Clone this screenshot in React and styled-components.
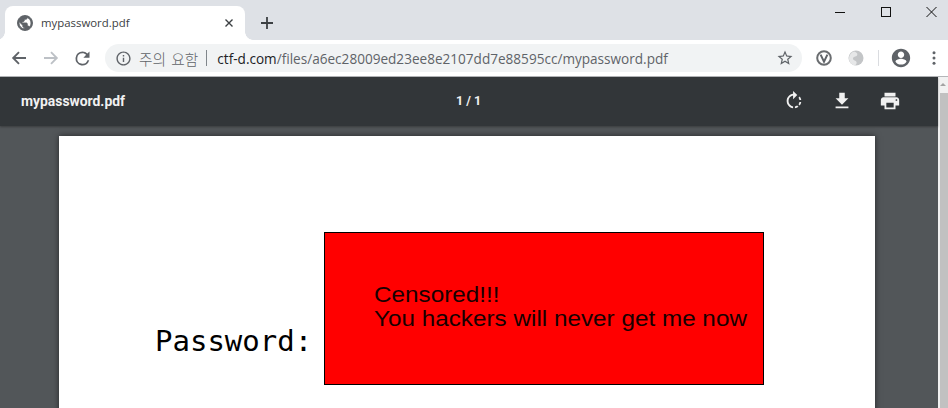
import React from 'react';
import styled, { createGlobalStyle } from 'styled-components';

const GlobalStyle = createGlobalStyle`
  html, body {
    margin: 0;
    padding: 0;
    height: 408px;
    overflow: hidden;
    background: #fff;
    font-family: "Roboto", "Liberation Sans", sans-serif;
  }
`;

const Browser = styled.div`
  width: 948px;
  height: 408px;
  display: flex;
  flex-direction: column;
  overflow: hidden;
`;

const TabStrip = styled.div`
  height: 40px;
  flex: none;
  background: #dee1e6;
  display: flex;
  align-items: flex-end;
  padding-left: 5px;
`;

const Tab = styled.div`
  position: relative;
  width: 240px;
  height: 34px;
  background: #fff;
  border-radius: 8px 8px 0 0;
  display: flex;
  align-items: center;
  padding: 0 0 0 11px;
  box-sizing: border-box;
  color: #3c4043;
  font-size: 11.4px;
  font-family: "Open Sans", sans-serif;

  &::before, &::after {
    content: '';
    position: absolute;
    bottom: 0;
    width: 8px;
    height: 8px;
    background: radial-gradient(circle at 0 0, #dee1e6 7.5px, #fff 8px);
  }
  &::before { left: -8px; }
  &::after { right: -8px; background: radial-gradient(circle at 100% 0, #dee1e6 7.5px, #fff 8px); }
`;

const TabTitle = styled.span`
  margin-left: 7px;
  flex: 1;
  position: relative;
  top: -1px;
`;

const TabClose = styled.svg`
  width: 8px;
  height: 8px;
  margin-right: 12px;
`;

const NewTab = styled.svg`
  width: 12px;
  height: 12px;
  margin: 0 0 11px 16px;
`;

const WindowControls = styled.div`
  margin-left: auto;
  margin-right: -7px;
  align-self: flex-start;
  display: flex;
  align-items: center;
  height: 24px;
`;

const WindowButton = styled.svg`
  width: 46px;
  height: 24px;
  display: block;
`;

const Toolbar = styled.div`
  height: 36px;
  flex: none;
  background: #fff;
  display: flex;
  align-items: center;
  box-sizing: border-box;
  padding-left: 11px;
`;

const NavIcon = styled.svg`
  width: ${p => p.$size || 16}px;
  height: ${p => p.$size || 16}px;
  margin-right: ${p => p.$gap}px;
  flex: none;
`;

const Omnibox = styled.div`
  width: 697px;
  height: 28px;
  flex: none;
  border-radius: 14px;
  background: #f1f3f4;
  display: flex;
  align-items: center;
  padding: 0 8px 0 10px;
  box-sizing: border-box;
  font-family: "Open Sans", sans-serif;
`;

const OmniIcon = styled.svg`
  width: ${p => p.$size}px;
  height: ${p => p.$size}px;
  flex: none;
`;

const Security = styled.span`
  color: #5f6368;
  font-family: "Noto Sans CJK KR", sans-serif;
  font-size: 14.7px;
  font-weight: 300;
  word-spacing: 2px;
  margin-left: 7px;
  white-space: nowrap;
`;

const Divider = styled.span`
  width: 1px;
  height: 16px;
  background: #80868b;
  margin: 0 10px 0 8px;
`;

const Url = styled.span`
  color: #5f6368;
  flex: 1;
  white-space: nowrap;
  font-size: 13.58px;
  b { font-weight: 400; color: #202124; }
`;

const Extensions = styled.div`
  display: flex;
  align-items: center;
  flex: none;
  margin-left: 14px;
`;

const ExtIcon = styled.svg`
  width: ${p => p.$size || 16}px;
  height: ${p => p.$size || 16}px;
  margin-right: ${p => p.$gap}px;
  flex: none;
`;

const ExtDivider = styled.span`
  width: 1px;
  height: 16px;
  background: #dadce0;
  margin-right: 11px;
`;

const ContentArea = styled.div`
  flex: 1;
  display: flex;
  min-height: 0;
  border-top: 1px solid #b4b6b9;
`;

const Viewer = styled.div`
  flex: 1;
  display: flex;
  flex-direction: column;
  background: #525659;
  min-width: 0;
`;

const PdfToolbar = styled.div`
  height: 49px;
  flex: none;
  background: #323639;
  color: #f1f1f1;
  display: grid;
  grid-template-columns: 1fr auto 1fr;
  align-items: center;
  padding: 0 37px 0 21px;
  box-shadow: 0 1px 2px rgba(0, 0, 0, 0.3);
  font-size: 13.9px;
  font-weight: 700;
  font-family: "Roboto", sans-serif;
  position: relative;
`;

const DocTitle = styled.span`
  margin-bottom: 2px;
`;

const PageCount = styled.span`
  font-size: 12.5px;
  font-weight: 700;
  margin: 0 0 2px 15px;
`;

const PdfActions = styled.div`
  display: flex;
  justify-content: flex-end;
  align-items: center;
  gap: 26px;
  margin-bottom: 1px;
`;

const PdfIcon = styled.svg`
  width: 22px;
  height: 22px;
  display: block;
  fill: #f1f1f1;
`;

const PageWrap = styled.div`
  flex: 1;
  padding: 10px 63px 0 59px;
  min-height: 0;
  overflow: hidden;
`;

const Page = styled.div`
  background: #fff;
  height: 400px;
  box-shadow: 0 0 6px rgba(0, 0, 0, 0.55);
  display: flex;
  align-items: flex-start;
  padding: 96px 0 0 96px;
  box-sizing: border-box;
`;

const PasswordLabel = styled.span`
  font-family: "DejaVu Sans Mono", monospace;
  font-size: 29px;
  line-height: 32px;
  color: #000;
  margin-top: 93px;
  margin-right: 12px;
  width: 157px;
  white-space: nowrap;
`;

const Censored = styled.div`
  width: 440px;
  height: 153px;
  flex: none;
  box-sizing: border-box;
  background: #ff0000;
  border: 1px solid #000;
  padding: 50px 0 0 49px;
`;

const CensoredText = styled.div`
  font-family: "Liberation Sans", sans-serif;
  font-size: 21.4px;
  line-height: 24px;
  color: #180000;
  white-space: nowrap;
  transform: scaleX(1.135);
  transform-origin: left top;
`;

const Scrollbar = styled.div`
  width: 10px;
  flex: none;
  background: #f1f1f1;
  display: flex;
  flex-direction: column;
  align-items: flex-end;
`;

const ScrollArrow = styled.div`
  height: 16px;
  width: 100%;
  display: flex;
  justify-content: center;
  padding-top: 6px;
  box-sizing: border-box;
  &::before {
    content: '';
    border-left: 3px solid transparent;
    border-right: 3px solid transparent;
    border-bottom: 3px solid #a3a3a3;
    height: 0;
  }
`;

const ScrollThumb = styled.div`
  width: 8px;
  flex: 1;
  background: #c1c1c1;
`;

const App = () => (
  <Browser>
    <GlobalStyle />
    <TabStrip>
      <Tab>
        <svg width="18" height="18" viewBox="0 0 24 24">
          <path fill="#5f6368" stroke="#5f6368" strokeWidth="1.2" d="M12 2C6.48 2 2 6.48 2 12s4.48 10 10 10 10-4.48 10-10S17.52 2 12 2zm-1 17.93c-3.95-.49-7-3.85-7-7.93 0-.62.08-1.21.21-1.79L9 15v1c0 1.1.9 2 2 2v1.93zm6.9-2.54c-.26-.81-1-1.39-1.9-1.39h-1v-3c0-.55-.45-1-1-1H8v-2h2c.55 0 1-.45 1-1V7h2c1.1 0 2-.9 2-2v-.41c2.93 1.19 5 4.06 5 7.41 0 2.08-.8 3.97-2.1 5.39z" />
        </svg>
        <TabTitle>mypassword.pdf</TabTitle>
        <TabClose viewBox="0 0 8 8">
          <path d="M0.5 0.5L7.5 7.5M7.5 0.5L0.5 7.5" stroke="#3c4043" strokeWidth="1.4" />
        </TabClose>
      </Tab>
      <NewTab viewBox="0 0 12 12">
        <path d="M6 0v12M0 6h12" stroke="#3c4043" strokeWidth="1.8" />
      </NewTab>
      <WindowControls>
        <WindowButton viewBox="0 0 46 24">
          <path d="M18 12.5h10" stroke="#111" strokeWidth="1" />
        </WindowButton>
        <WindowButton viewBox="0 0 46 24">
          <rect x="18.5" y="7.5" width="9" height="9" fill="none" stroke="#111" />
        </WindowButton>
        <WindowButton viewBox="0 0 46 24">
          <path d="M17.5 7l10 10M27.5 7l-10 10" stroke="#111" strokeWidth="1" />
        </WindowButton>
      </WindowControls>
    </TabStrip>

    <Toolbar>
      <NavIcon $gap={16} viewBox="0 0 16 16">
        <path d="M15 8H2.5M8 2.2L2.2 8 8 13.8" fill="none" stroke="#5f6368" strokeWidth="1.9" />
      </NavIcon>
      <NavIcon $gap={13} viewBox="0 0 16 16">
        <path d="M1 8h12.5M8 2.2L13.8 8 8 13.8" fill="none" stroke="#bdc1c6" strokeWidth="1.9" />
      </NavIcon>
      <NavIcon $gap={12} $size={21} viewBox="0 0 24 24">
        <path fill="#5f6368" d="M17.65 6.35A7.96 7.96 0 0 0 12 4a8 8 0 1 0 7.73 10h-2.08A6 6 0 1 1 12 6c1.66 0 3.14.69 4.22 1.78L13 11h7V4l-2.35 2.35z" />
      </NavIcon>
      <Omnibox>
        <OmniIcon $size={17} viewBox="0 0 24 24">
          <path fill="#5f6368" d="M11 7h2v2h-2zm0 4h2v6h-2zm1-9C6.48 2 2 6.48 2 12s4.48 10 10 10 10-4.48 10-10S17.52 2 12 2zm0 18c-4.41 0-8-3.59-8-8s3.59-8 8-8 8 3.59 8 8-3.59 8-8 8z" />
        </OmniIcon>
        <Security>주의 요함</Security>
        <Divider />
        <Url><b>ctf-d.com</b>/files/a6ec28009ed23ee8e2107dd7e88595cc/mypassword.pdf</Url>
        <OmniIcon $size={18} viewBox="0 0 24 24">
          <path fill="#5f6368" d="M22 9.24l-7.19-.62L12 2 9.19 8.63 2 9.24l5.46 4.73L5.82 21 12 17.27 18.18 21l-1.63-7.03L22 9.24zM12 15.4l-3.76 2.27 1-4.28-3.32-2.88 4.38-.38L12 6.1l1.71 4.04 4.38.38-3.32 2.88 1 4.28L12 15.4z" />
        </OmniIcon>
      </Omnibox>
      <Extensions>
        <ExtIcon $gap={16} viewBox="0 0 16 16">
          <circle cx="8" cy="8" r="6.8" fill="none" stroke="#6a6d70" strokeWidth="2" />
          <path d="M4.6 4.6L8 11.6l3.4-7" fill="none" stroke="#5f6368" strokeWidth="2" />
        </ExtIcon>
        <ExtIcon $gap={14} viewBox="0 0 16 16">
          <circle cx="8" cy="8" r="7.5" fill="#c3c5c7" />
          <path d="M6 1.5c3 .5 4 2.5 3 4s-4 1-4 3 3 2 3.5 3.5-.5 2.5-1.5 3.5c-4-.5-6-4-6-7 0-3 2-6 5-7z" fill="#e6e7e8" />
        </ExtIcon>
        <ExtDivider />
        <ExtIcon $gap={14} $size={22} viewBox="0 0 24 24">
          <path fill="#5f6368" d="M12 2C6.48 2 2 6.48 2 12s4.48 10 10 10 10-4.48 10-10S17.52 2 12 2zm0 3c1.93 0 3.5 1.57 3.5 3.5S13.93 12 12 12s-3.5-1.57-3.5-3.5S10.07 5 12 5zm0 14.2c-2.5 0-4.71-1.28-6-3.22.03-1.99 4-3.08 6-3.08s5.97 1.09 6 3.08c-1.29 1.94-3.5 3.22-6 3.22z" />
        </ExtIcon>
        <ExtIcon $gap={0} viewBox="0 0 16 16">
          <circle cx="8" cy="2.8" r="1.5" fill="#5f6368" />
          <circle cx="8" cy="8" r="1.5" fill="#5f6368" />
          <circle cx="8" cy="13.2" r="1.5" fill="#5f6368" />
        </ExtIcon>
      </Extensions>
    </Toolbar>

    <ContentArea>
      <Viewer>
        <PdfToolbar>
          <DocTitle>mypassword.pdf</DocTitle>
          <PageCount>1 / 1</PageCount>
          <PdfActions>
            <PdfIcon viewBox="0 0 24 24">
              <path d="M15.55 5.55L11 1v3.07C7.06 4.56 4 7.92 4 12s3.05 7.44 7 7.93v-2.02c-2.84-.48-5-2.94-5-5.91s2.16-5.43 5-5.91V10l4.55-4.45zM19.93 11c-.17-1.39-.72-2.73-1.62-3.89l-1.42 1.42c.54.75.88 1.6 1.02 2.47h2.02zM13 17.9v2.02c1.39-.17 2.74-.71 3.9-1.61l-1.44-1.44c-.75.54-1.59.89-2.46 1.03zm3.89-2.42l1.42 1.41c.9-1.16 1.45-2.5 1.62-3.89h-2.02c-.14.87-.48 1.72-1.02 2.48z" />
            </PdfIcon>
            <PdfIcon viewBox="0 0 24 24">
              <path d="M19 9h-4V3H9v6H5l7 7 7-7zM5 18v2h14v-2H5z" />
            </PdfIcon>
            <PdfIcon viewBox="0 0 24 24">
              <path d="M19 8H5c-1.66 0-3 1.34-3 3v6h4v4h12v-4h4v-6c0-1.66-1.34-3-3-3zm-3 11H8v-5h8v5zm3-7c-.55 0-1-.45-1-1s.45-1 1-1 1 .45 1 1-.45 1-1 1zm-1-9H6v4h12V3z" />
            </PdfIcon>
          </PdfActions>
        </PdfToolbar>
        <PageWrap>
          <Page>
            <PasswordLabel>Password:</PasswordLabel>
            <Censored>
              <CensoredText>
                Censored!!!<br />
                You hackers will never get me now
              </CensoredText>
            </Censored>
          </Page>
        </PageWrap>
      </Viewer>
      <Scrollbar>
        <ScrollArrow />
        <ScrollThumb />
      </Scrollbar>
    </ContentArea>
  </Browser>
);

export default App;
